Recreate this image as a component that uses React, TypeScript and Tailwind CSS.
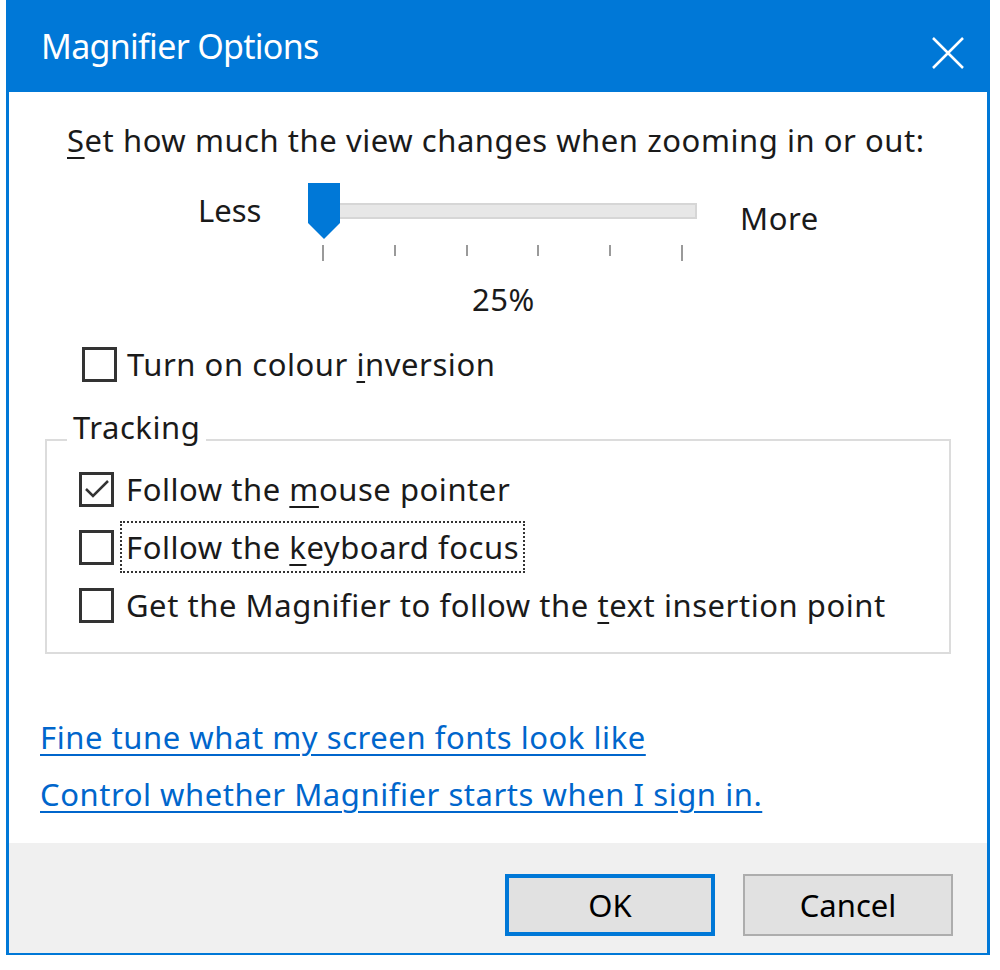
import React from "react";

const font = { fontFamily: '"Noto Sans", "Open Sans", sans-serif' };

const CheckBox = ({ checked = false }: { checked?: boolean }) => (
  <div className="w-[35px] h-[35px] border-[3px] border-[#333333] bg-white flex items-center justify-center shrink-0">
    {checked && (
      <svg width="28" height="24" viewBox="0 0 28 24">
        <path d="M3 12 L10 19 L25 4" fill="none" stroke="#333333" strokeWidth="2.5" />
      </svg>
    )}
  </div>
);

const Ul = ({ children }: { children: React.ReactNode }) => (
  <span className="underline decoration-[2px] underline-offset-[5px]">{children}</span>
);

export default function App() {
  return (
    <div className="w-[1000px] h-[970px] bg-white" style={font}>
      <div className="ml-[6px] w-[984px] h-[955px] border-x-[3px] border-b-[2px] border-[#0078d7] flex flex-col bg-white">
        {/* title bar */}
        <div className="h-[92px] bg-[#0078d7] flex items-center justify-between pl-[32px] pr-[22px] shrink-0">
          <span className="text-white text-[34px] tracking-[-0.7px]">Magnifier Options</span>
          <svg width="34" height="34" viewBox="0 0 34 34" className="mt-[14px]">
            <path d="M2 2 L32 32 M32 2 L2 32" stroke="white" strokeWidth="2.5" />
          </svg>
        </div>

        {/* body */}
        <div className="flex-1 flex flex-col text-[#1a1a1a] text-[31px] leading-[44px] tracking-[0.55px]">
          <div className="pl-[58px] pt-[26px]">
            <Ul>S</Ul>et how much the view changes when zooming in or out:
          </div>

          {/* slider */}
          <div className="flex items-start pl-[189px] mt-[21px]">
            <span className="w-[110px] pt-[5px] tracking-normal">Less</span>
            <div className="flex flex-col w-[389px]">
              <div className="relative h-[56px]">
                <div className="absolute left-[30px] right-0 top-[20px] h-[16px] bg-[#e7e7e7] border-[2px] border-[#d6d6d6]"></div>
                <svg width="34" height="56" viewBox="0 0 34 56" className="absolute left-0 top-0">
                  <path d="M0 0 H32 V40 L16 56 L0 40 Z" fill="#0078d7" />
                </svg>
              </div>
              <div className="flex items-start justify-between pl-[14px] pr-[14px] mt-[6px]">
                {[0, 1, 2, 3, 4, 5].map((i) => (
                  <div
                    key={i}
                    className={`w-[2px] bg-[#9a9a9a] ${i === 0 || i === 5 ? "h-[16px]" : "h-[11px]"}`}
                  ></div>
                ))}
              </div>
            </div>
            <span className="pl-[43px] pt-[13px]">More</span>
          </div>

          <div className="pl-[463px] mt-[16px]">25%</div>

          <div className="flex items-center gap-[10px] pl-[73px] mt-[21px]">
            <CheckBox />
            <span>
              Turn on colour <Ul>i</Ul>nversion
            </span>
          </div>

          {/* tracking group */}
          <div className="relative ml-[36px] mr-[36px] mt-[53px] h-[215px] border-[2px] border-[#dcdcdc] flex flex-col pt-[26px] pl-[32px] gap-[14px]">
            <span className="absolute left-[20px] top-[-36px] bg-white px-[6px]">Tracking</span>
            <div className="flex items-center gap-[12px]">
              <CheckBox checked />
              <span>
                Follow the <Ul>m</Ul>ouse pointer
              </span>
            </div>
            <div className="flex items-center gap-[6px]">
              <CheckBox />
              <span className="border-[2px] border-dotted border-[#333333] px-[4px] -my-[4px] py-[2px]">
                Follow the <Ul>k</Ul>eyboard focus
              </span>
            </div>
            <div className="flex items-center gap-[12px]">
              <CheckBox />
              <span>
                Get the Magnifier to follow the <Ul>t</Ul>ext insertion point
              </span>
            </div>
          </div>

          {/* links */}
          <div className="flex flex-col pl-[31px] mt-[61px] gap-[13px] text-[#0066cc]">
            <span className="underline decoration-[2px] underline-offset-[5px]">
              Fine tune what my screen fonts look like
            </span>
            <span className="underline decoration-[2px] underline-offset-[5px]">
              Control whether Magnifier starts when I sign in.
            </span>
          </div>

          {/* footer */}
          <div className="mt-auto h-[110px] bg-[#f0f0f0] flex items-center justify-end gap-[28px] pr-[34px] pt-[14px] tracking-normal">
            <button className="w-[210px] h-[62px] bg-[#e1e1e1] border-[4px] border-[#0078d7] text-black">
              OK
            </button>
            <button className="w-[210px] h-[62px] bg-[#e1e1e1] border-[2px] border-[#adadad] text-black">
              Cancel
            </button>
          </div>
        </div>
      </div>
    </div>
  );
}
